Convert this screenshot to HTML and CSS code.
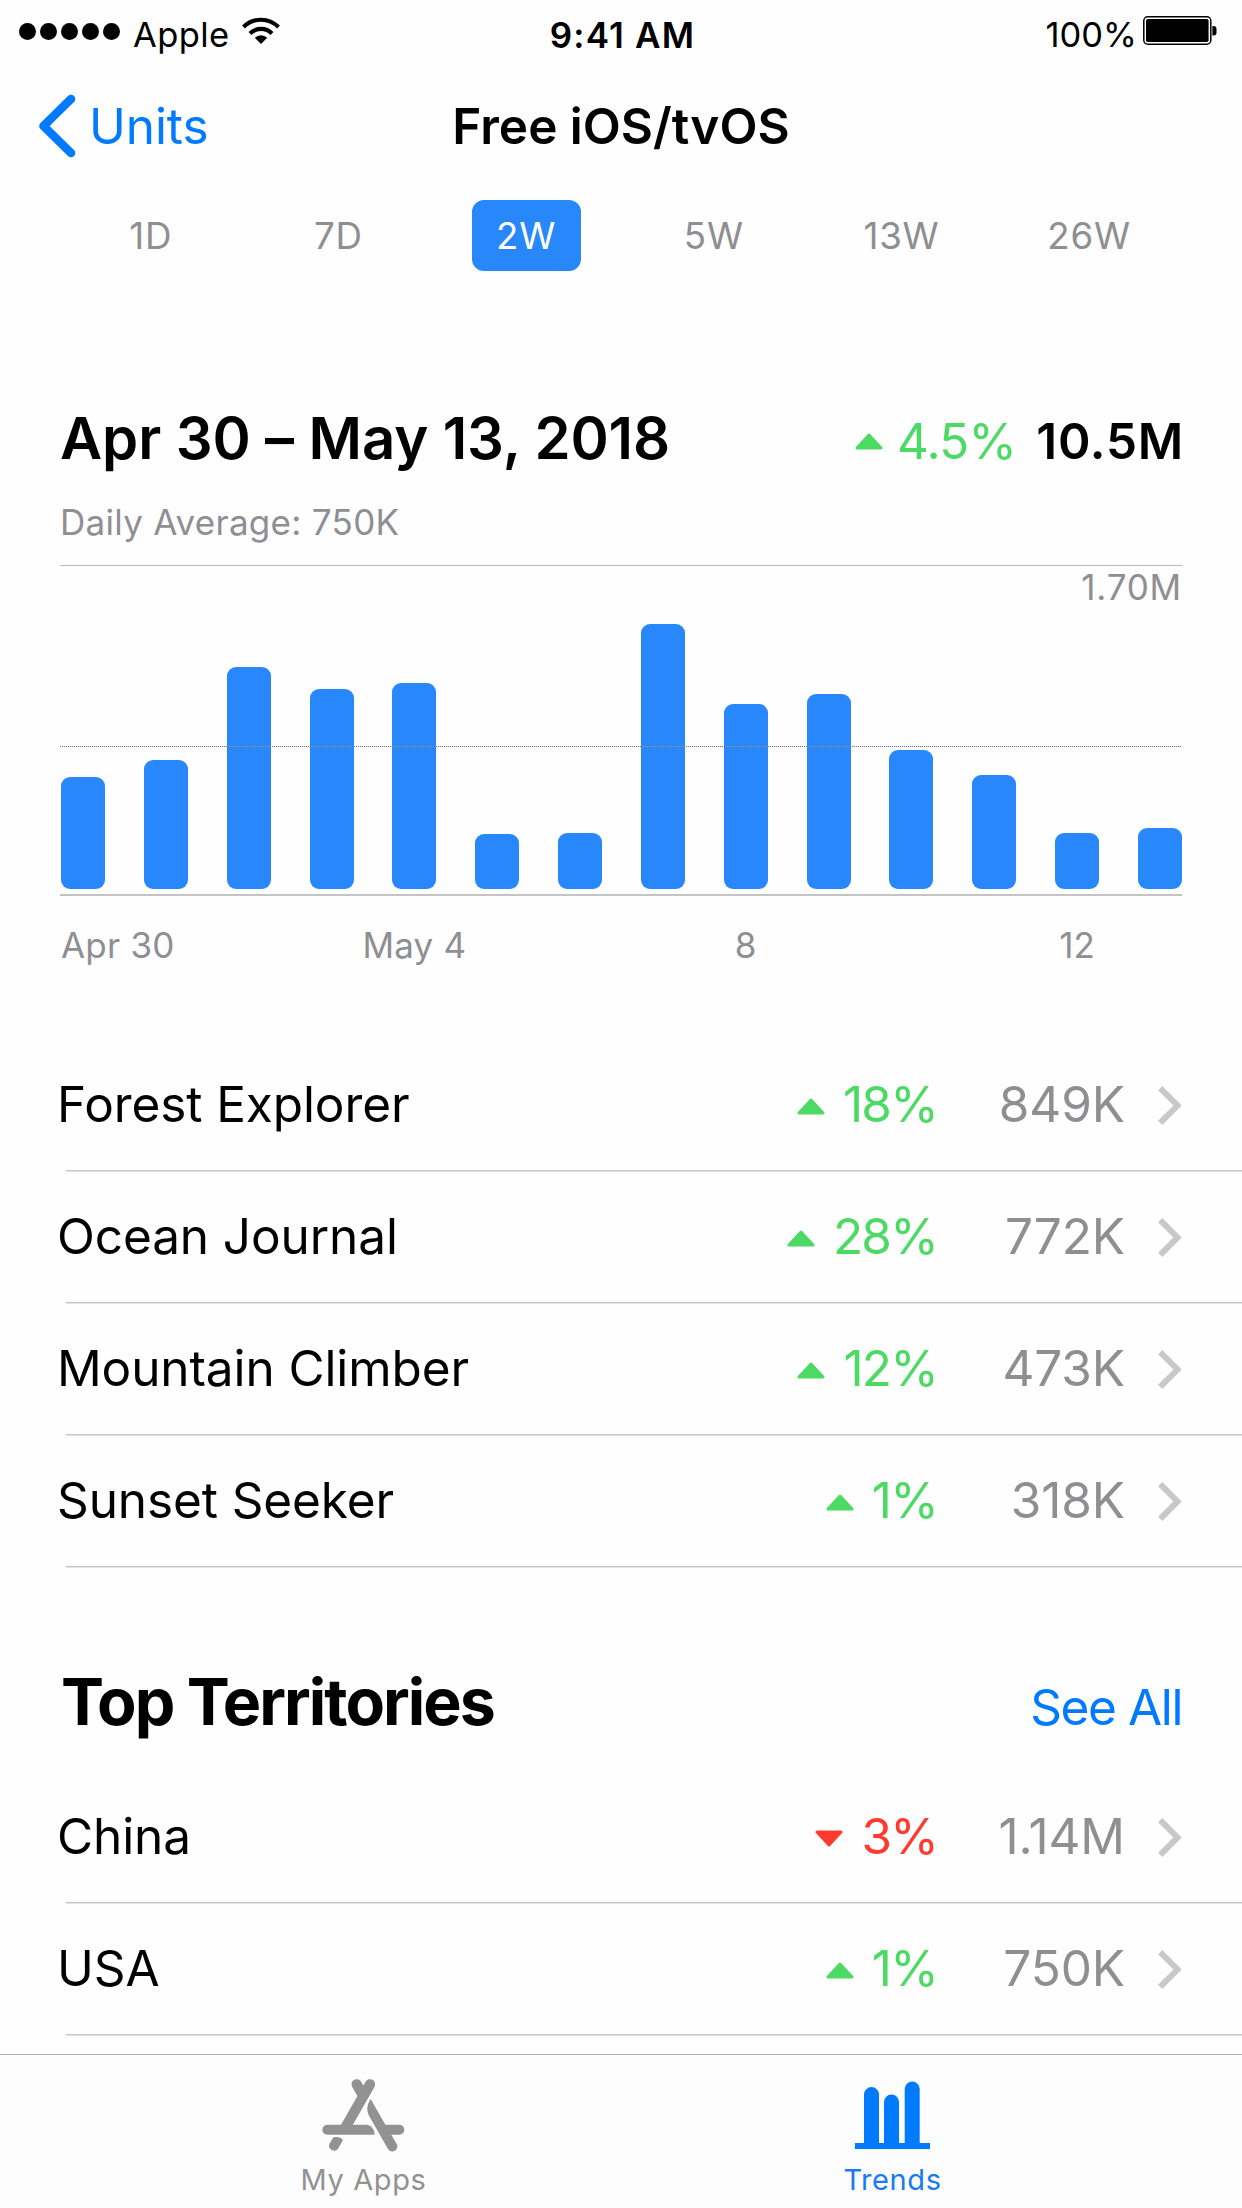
FILE: index.html
```
<!DOCTYPE html>
<html lang="en">
<head>
  <meta charset="UTF-8" />
  <title>Free iOS/tvOS</title>
  <link rel="stylesheet" href="styles.css">
</head>
<body>
  <svg class="defs" width="0" height="0">
    <symbol id="up" viewBox="0 0 28 17"><path d="M14 2 L26 15 H2 Z" fill="currentColor" stroke="currentColor" stroke-width="3" stroke-linejoin="round"/></symbol>
    <symbol id="down" viewBox="0 0 28 17"><path d="M14 15 L2 2 H26 Z" fill="currentColor" stroke="currentColor" stroke-width="3" stroke-linejoin="round"/></symbol>
    <symbol id="chevron" viewBox="0 0 24 39"><path d="M2.2 2.2 L19.5 19.5 L2.2 36.8" fill="none" stroke="#c7c7cc" stroke-width="6"/></symbol>
  </svg>

  <div class="wrapper">
    <div class="status-bar">
      <div class="status-left">
        <div class="signal"><i></i><i></i><i></i><i></i><i></i></div>
        <span class="carrier">Apple</span>
        <svg class="wifi" viewBox="0 0 38 27" width="38" height="27">
          <path d="M1.5 10 A24.5 24.5 0 0 1 36.5 10" fill="none" stroke="#000" stroke-width="4"/>
          <path d="M8 16.5 A15.5 15.5 0 0 1 30 16.5" fill="none" stroke="#000" stroke-width="4.2"/>
          <path d="M19 27 L12.8 20.8 A8.8 8.8 0 0 1 25.2 20.8 Z"/>
        </svg>
      </div>
      <span class="time">9:41 AM</span>
      <div class="status-right">
        <span class="percent">100%</span>
        <svg class="battery" viewBox="0 0 74 29" width="74" height="29">
          <rect x="0.8" y="0.8" width="67" height="27.4" rx="4" fill="none" stroke="#000" stroke-width="1.5"/>
          <rect x="3" y="3" width="62.6" height="23" rx="1.8"/>
          <path d="M69.4 10 h1.1 a3 3 0 0 1 3 3 v3.5 a3 3 0 0 1 -3 3 h-1.1 z"/>
        </svg>
      </div>
    </div>

    <header>
      <a class="back">
        <svg viewBox="0 0 38 64" width="38" height="64"><path d="M33 5 L5.5 32 L33 59" fill="none" stroke="#007aff" stroke-width="8.6" stroke-linecap="round" stroke-linejoin="round"/></svg>
        Units
      </a>
      <h1>Free iOS/tvOS</h1>
    </header>

    <nav class="ranges">
      <a>1D</a>
      <a>7D</a>
      <a class="active">2W</a>
      <a>5W</a>
      <a>13W</a>
      <a>26W</a>
    </nav>

    <main>
      <section class="summary">
        <div class="summary-head">
          <h2>Apr 30 – May 13, 2018</h2>
          <div class="totals">
            <svg class="arrow up" width="28" height="17"><use href="#up"/></svg>
            <span class="total-change">4.5%</span>
            <span class="total">10.5M</span>
          </div>
        </div>
        <p class="average">Daily Average: 750K</p>

        <div class="chart">
          <span class="max">1.70M</span>
          <div class="bar" style="height:112px"></div>
          <div class="bar" style="height:129px"></div>
          <div class="bar" style="height:222.5px"></div>
          <div class="bar" style="height:200px"></div>
          <div class="bar" style="height:206px"></div>
          <div class="bar" style="height:55px"></div>
          <div class="bar" style="height:56px"></div>
          <div class="bar" style="height:265px"></div>
          <div class="bar" style="height:185px"></div>
          <div class="bar" style="height:195px"></div>
          <div class="bar" style="height:139.5px"></div>
          <div class="bar" style="height:114px"></div>
          <div class="bar" style="height:56px"></div>
          <div class="bar" style="height:61px"></div>
          <div class="midline"></div>
        </div>
        <div class="axis">
          <span class="first">Apr 30</span><span></span><span></span><span></span>
          <span>May 4</span><span></span><span></span><span></span>
          <span>8</span><span></span><span></span><span></span>
          <span>12</span><span></span>
        </div>
      </section>

      <section class="list">
        <div class="row">
          <span class="name">Forest Explorer</span>
          <svg class="arrow up" width="28" height="17"><use href="#up"/></svg>
          <span class="change up">18%</span>
          <span class="value">849K</span>
          <svg class="chevron" width="24" height="39"><use href="#chevron"/></svg>
        </div>
        <div class="row">
          <span class="name">Ocean Journal</span>
          <svg class="arrow up" width="28" height="17"><use href="#up"/></svg>
          <span class="change up">28%</span>
          <span class="value">772K</span>
          <svg class="chevron" width="24" height="39"><use href="#chevron"/></svg>
        </div>
        <div class="row">
          <span class="name">Mountain Climber</span>
          <svg class="arrow up" width="28" height="17"><use href="#up"/></svg>
          <span class="change up">12%</span>
          <span class="value">473K</span>
          <svg class="chevron" width="24" height="39"><use href="#chevron"/></svg>
        </div>
        <div class="row">
          <span class="name">Sunset Seeker</span>
          <svg class="arrow up" width="28" height="17"><use href="#up"/></svg>
          <span class="change up">1%</span>
          <span class="value">318K</span>
          <svg class="chevron" width="24" height="39"><use href="#chevron"/></svg>
        </div>
      </section>

      <div class="section-head">
        <h3>Top Territories</h3>
        <a>See All</a>
      </div>

      <section class="list">
        <div class="row">
          <span class="name">China</span>
          <svg class="arrow down" width="28" height="17"><use href="#down"/></svg>
          <span class="change down">3%</span>
          <span class="value">1.14M</span>
          <svg class="chevron" width="24" height="39"><use href="#chevron"/></svg>
        </div>
        <div class="row">
          <span class="name">USA</span>
          <svg class="arrow up" width="28" height="17"><use href="#up"/></svg>
          <span class="change up">1%</span>
          <span class="value">750K</span>
          <svg class="chevron" width="24" height="39"><use href="#chevron"/></svg>
        </div>
      </section>
    </main>

    <footer>
      <a class="tab">
        <svg viewBox="185 170 249 225" width="83" height="75">
          <g fill="#929292">
            <path d="M329 192 L256 320 M289 192 L305 220" stroke="#929292" stroke-width="31" stroke-linecap="round"/>
            <path d="M201 313 H322 Q343 320 343 343 H201 A15 15 0 0 1 201 313 Z"/>
            <path d="M331 236 L375 313 H417 A15 15 0 0 1 417 343 H393 L409 371 A15 15 0 0 1 383 386 L326 286 Q313 262 331 236 Z"/>
            <path d="M219 351 Q238 347 248 359 L233 385 A15 15 0 0 1 207 371 Z"/>
          </g>
        </svg>
        My Apps
      </a>
      <a class="tab active">
        <svg viewBox="0 0 75 75" width="75" height="75">
          <path fill="#007aff" d="M0 66 H9 V17.5 A7.5 7.5 0 0 1 24 17.5 V66 H29 V25 A7.5 7.5 0 0 1 44 25 V66 H49.7 V12 A7.5 7.5 0 0 1 64.7 12 V66 H75 V72 H0 Z"/>
        </svg>
        Trends
      </a>
    </footer>
  </div>
</body>
</html>
```
FILE: styles.css
```
* {
  box-sizing: border-box;
  margin: 0;
  padding: 0;
}

body {
  font-family: Inter, 'Open Sans', sans-serif;
  background-color: #fefefe;
  color: #000;
}

svg {
  display: block;
  flex-shrink: 0;
}

.defs {
  position: absolute;
}

.wrapper {
  width: 1242px;
  height: 2208px;
  display: flex;
  flex-direction: column;
  overflow: hidden;
}

/* Status bar */
.status-bar {
  display: grid;
  grid-template-columns: 1fr auto 1fr;
  align-items: center;
  height: 69px;
  padding: 0 25px 0 19px;
  font-size: 34.5px;
}

.status-left,
.status-right {
  display: flex;
  align-items: center;
}

.status-right {
  justify-content: flex-end;
}

.signal {
  display: flex;
  gap: 4px;
  margin-bottom: 7px;
}

.signal i {
  width: 17px;
  height: 17px;
  border-radius: 50%;
  background: #000;
}

.carrier {
  margin: 0 12px 0 13px;
  letter-spacing: 0.4px;
}

.wifi {
  margin-bottom: 9px;
}

.time {
  font-size: 35px;
  font-weight: 600;
  letter-spacing: 1.2px;
  padding-top: 1px;
  margin-left: 9px;
}

.battery {
  margin: 0 0 8px 6px;
}

/* Title bar */
header {
  display: grid;
  grid-template-columns: 1fr auto 1fr;
  align-items: center;
  height: 114px;
  padding: 0 38px;
  font-size: 49.5px;
}

.back {
  display: flex;
  align-items: center;
  gap: 13px;
  letter-spacing: -0.1px;
  color: #007aff;
}

h1 {
  font-size: 49.5px;
  font-weight: 600;
}

.ranges {
  display: grid;
  grid-template-columns: repeat(6, 1fr);
  justify-items: center;
  margin-top: 17px;
  padding: 0 59px 0 57px;
}

.ranges a {
  width: 109px;
  line-height: 71px;
  border-radius: 12px;
  text-align: center;
  font-size: 36.7px;
  letter-spacing: 0.8px;
  color: #8e8e93;
}

.ranges .active {
  background: #2787fb;
  color: white;
}

/* Summary and chart */
.summary {
  margin-top: 132px;
  padding: 0 60px;
}

.summary-head {
  display: flex;
  justify-content: space-between;
  height: 70px;
  margin-right: -2px;
}

h2 {
  font-size: 58px;
  font-weight: 600;
  line-height: 70px;
  letter-spacing: -0.1px;
}

.totals {
  display: flex;
  align-items: center;
  height: 76px;
  font-size: 49.3px;
}

.total-change {
  margin: 0 20px 0 14px;
  letter-spacing: -0.7px;
  color: #4cd964;
}

.total {
  font-weight: 600;
  letter-spacing: 0.8px;
}

.average {
  margin-top: 28px;
  padding-bottom: 22px;
  height: 64px;
  line-height: 42px;
  font-size: 35px;
  letter-spacing: 0.3px;
  color: #8e8e93;
}

.chart {
  position: relative;
  display: flex;
  justify-content: space-between;
  align-items: flex-end;
  height: 331px;
  padding: 0 0 5px 1px;
  border-top: 1px solid #bbbbbd;
  border-bottom: 2px solid #c4c4c6;
}

.bar {
  width: 44px;
  border-radius: 9px;
  background: #2787fb;
}

.max {
  position: absolute;
  top: 0;
  right: 0;
  line-height: 42px;
  font-size: 35px;
  letter-spacing: 0.8px;
  color: #8e8e93;
}

.midline {
  position: absolute;
  top: 180px;
  left: 0;
  right: 1px;
  height: 1px;
  background: repeating-linear-gradient(90deg, #77777b 0 1px, #c8c8ca66 1px 2px);
}

.axis {
  display: flex;
  justify-content: space-between;
  height: 40px;
  margin-top: 29px;
  padding-left: 1px;
  line-height: 40px;
  font-size: 35px;
  letter-spacing: 0.2px;
  color: #8e8e93;
}

.axis span {
  display: flex;
  justify-content: center;
  width: 44px;
  white-space: nowrap;
}

.axis .first {
  justify-content: flex-start;
}

/* Lists */
.summary + .list {
  margin-top: 75px;
}

.row {
  display: flex;
  align-items: center;
  height: 132px;
  padding: 0 60px 4px 57px;
  font-size: 49.5px;
  background: linear-gradient(#c4c4c6 50%, #e3e3e5 50%) 66px 130px / 100% 2px no-repeat;
}

.name {
  flex: 1;
  letter-spacing: -0.1px;
}

.arrow {
  margin-top: 4px;
}

.totals .arrow {
  margin-top: 0;
}

.up {
  color: #4cd964;
}

.down {
  color: #ff3b30;
}

.change {
  margin-left: 18px;
  letter-spacing: -1.8px;
}

.value {
  width: 188px;
  text-align: right;
  letter-spacing: -0.1px;
  color: #8e8e93;
}

.chevron {
  margin: 3px 0 0 33px;
}

.section-head {
  display: flex;
  justify-content: space-between;
  align-items: baseline;
  height: 109px;
  margin-top: 95px;
  padding: 0 60px 0 61px;
}

h3 {
  font-size: 64.5px;
  font-weight: 700;
  line-height: 78px;
  letter-spacing: -1.95px;
}

.section-head a {
  font-size: 49.5px;
  letter-spacing: -1.4px;
  color: #007aff;
}

/* Tab bar */
footer {
  display: grid;
  grid-template-columns: 1fr 1fr;
  height: 154px;
  margin-top: auto;
  padding: 22px 85px 0 99px;
  border-top: 1px solid #b2b2b2;
  background: #fdfdfd;
}

.tab {
  display: flex;
  flex-direction: column;
  align-items: center;
  gap: 11px;
  line-height: 34px;
  font-size: 29px;
  letter-spacing: 0.6px;
  color: #929292;
}

.tab.active {
  color: #1a7af0;
}
```
